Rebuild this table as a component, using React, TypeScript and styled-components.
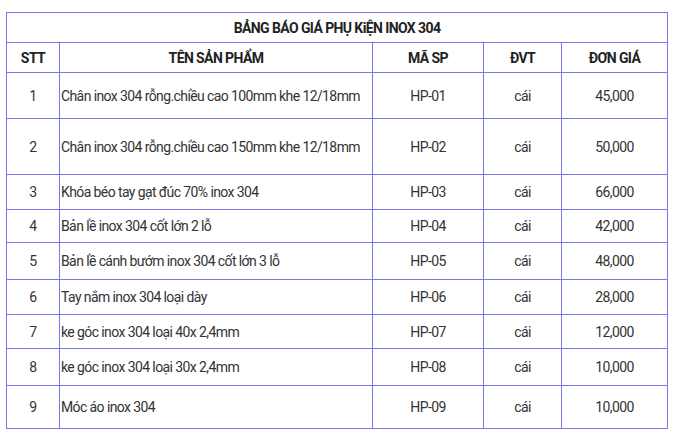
import styled, { createGlobalStyle } from 'styled-components'

const GlobalStyle = createGlobalStyle`
	html, body {
		margin: 0;
		padding: 0;
		background: #ffffff;
	}
	body {
		padding: 12px 0 0 6px;
		font-family: Roboto, "Noto Sans", "Liberation Sans", sans-serif;
		color: #333333;
	}
`

const PriceTable = styled.table`
	border-collapse: collapse;
	table-layout: fixed;
	width: 662px;
	font-size: 14px;
	letter-spacing: -0.6px;
`

const Row = styled.tr<{ $h: number }>`
	height: ${p => p.$h}px;
`

const Cell = styled.td<{ $align?: 'left' | 'center' }>`
	border: 1px solid #7878ee;
	padding: 0 0 0 ${p => (p.$align === 'left' ? '1px' : '0')};
	text-align: ${p => p.$align ?? 'center'};
	vertical-align: middle;
	line-height: 18px;
	white-space: nowrap;
`

const HeadCell = styled.th`
	border: 1px solid #7878ee;
	padding: 0;
	text-align: center;
	vertical-align: middle;
	font-weight: 700;
	color: #222222;
	line-height: 18px;
`

type Item = { name: string; code: string; unit: string; price: string; h: number }

const items: Item[] = [
	{ name: 'Chân inox 304 rỗng.chiều cao 100mm khe 12/18mm', code: 'HP-01', unit: 'cái', price: '45,000', h: 46 },
	{ name: 'Chân inox 304 rỗng.chiều cao 150mm khe 12/18mm', code: 'HP-02', unit: 'cái', price: '50,000', h: 56 },
	{ name: 'Khóa béo tay gạt đúc 70% inox 304', code: 'HP-03', unit: 'cái', price: '66,000', h: 35 },
	{ name: 'Bản lề inox 304 cốt lớn 2 lỗ', code: 'HP-04', unit: 'cái', price: '42,000', h: 33 },
	{ name: 'Bản lề cánh bướm inox 304 cốt lớn 3 lỗ', code: 'HP-05', unit: 'cái', price: '48,000', h: 37 },
	{ name: 'Tay nắm inox 304 loại dày', code: 'HP-06', unit: 'cái', price: '28,000', h: 35 },
	{ name: 'ke góc inox 304 loại 40x 2,4mm', code: 'HP-07', unit: 'cái', price: '12,000', h: 34 },
	{ name: 'ke góc inox 304 loại 30x 2,4mm', code: 'HP-08', unit: 'cái', price: '10,000', h: 37 },
	{ name: 'Móc áo inox 304', code: 'HP-09', unit: 'cái', price: '10,000', h: 43 },
]

const App = () => (
	<>
		<GlobalStyle />
		<PriceTable>
			<colgroup>
				<col style={{ width: 53 }} />
				<col style={{ width: 313 }} />
				<col style={{ width: 111 }} />
				<col style={{ width: 78 }} />
				<col style={{ width: 106 }} />
			</colgroup>
			<thead>
				<Row $h={30}>
					<HeadCell colSpan={5}>BẢNG BÁO GIÁ PHỤ KiỆN INOX 304</HeadCell>
				</Row>
				<Row $h={30}>
					<HeadCell>STT</HeadCell>
					<HeadCell>TÊN SẢN PHẨM</HeadCell>
					<HeadCell>MÃ SP</HeadCell>
					<HeadCell>ĐVT</HeadCell>
					<HeadCell>ĐƠN GIÁ</HeadCell>
				</Row>
			</thead>
			<tbody>
				{items.map((it, i) => (
					<Row $h={it.h} key={it.code}>
						<Cell>{i + 1}</Cell>
						<Cell $align="left">{it.name}</Cell>
						<Cell>{it.code}</Cell>
						<Cell>{it.unit}</Cell>
						<Cell>{it.price}</Cell>
					</Row>
				))}
			</tbody>
		</PriceTable>
	</>
)

export default App
